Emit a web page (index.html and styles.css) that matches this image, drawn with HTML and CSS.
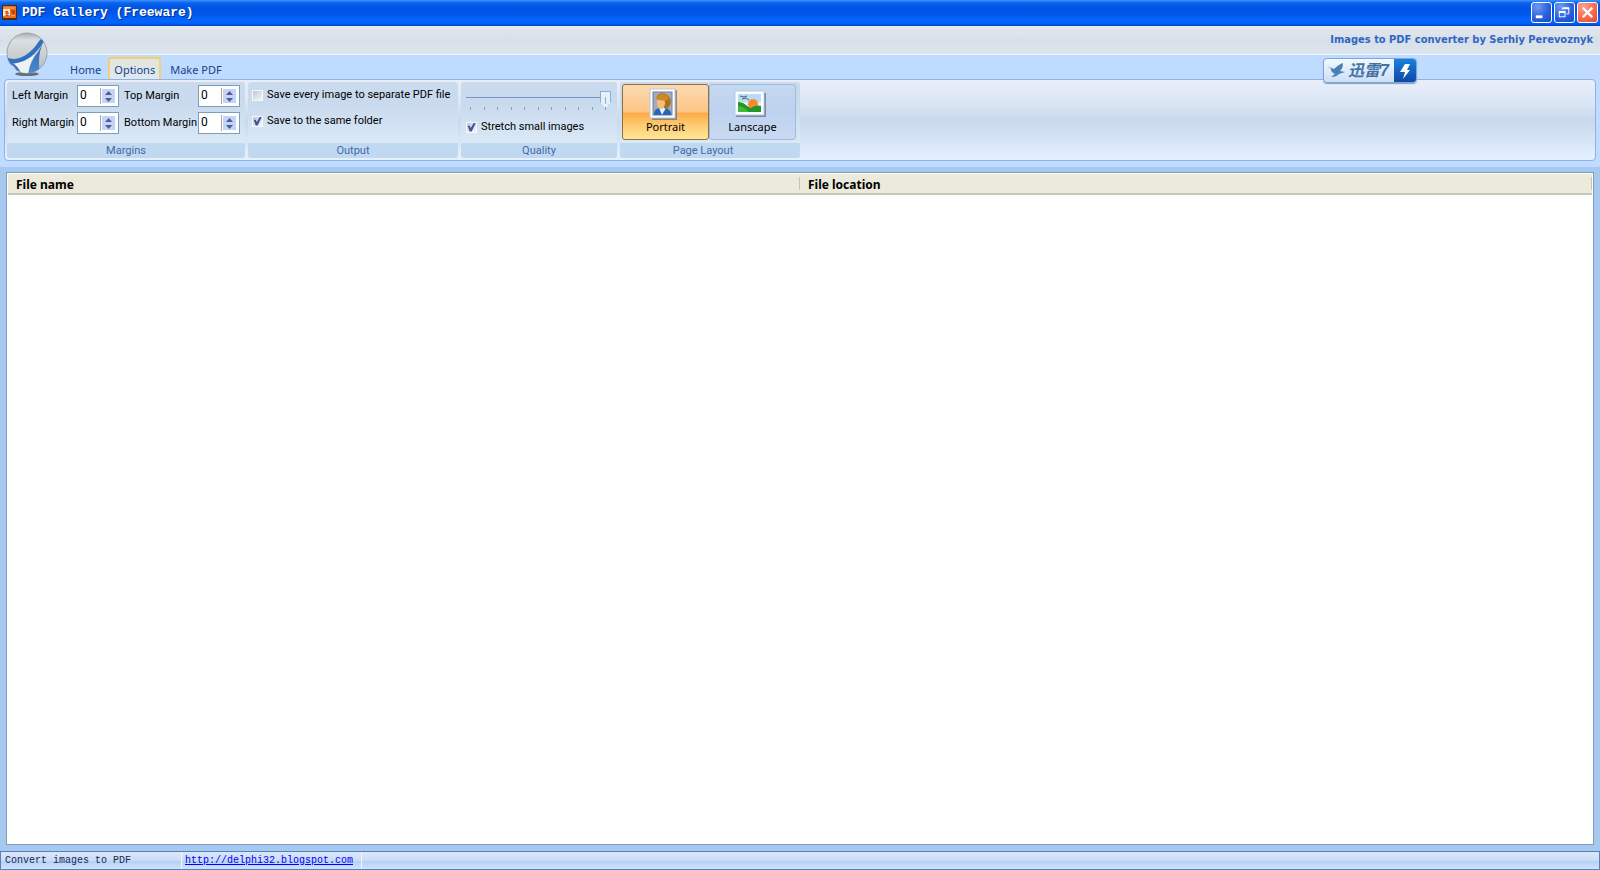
FILE: index.html
```
<!DOCTYPE html>
<html lang="en">
<head>
<meta charset="utf-8">
<title>PDF Gallery (Freeware)</title>
<link rel="stylesheet" href="styles.css">
</head>
<body>
<header class="titlebar">
  <svg class="app-icon" viewBox="0 0 15 15" aria-hidden="true"><rect width="15" height="15" fill="#5a2408"/><rect x="1" y="1" width="13" height="12" fill="#e8701a"/><rect x="1" y="4" width="7" height="7" fill="#f6e5cc"/><path d="M9 5h4v5l-3-1z" fill="#cf3e16"/><path d="M3 6h3l1 3-3 1z" fill="#da5b22"/><path d="M2 11l3-1 4 1z" fill="#8c4a1b"/><path d="M2 3h11M9 11l4-1" stroke="#ffb04b"/></svg>
  <h1 class="title">PDF Gallery (Freeware)</h1>
  <div class="window-buttons">
    <button class="win-btn" aria-label="Minimize"><svg viewBox="0 0 20 20"><rect x="4" y="13" width="7" height="3" fill="#fff"/></svg></button>
    <button class="win-btn" aria-label="Restore"><svg viewBox="0 0 20 20" fill="none" stroke="#fff"><path d="M8 7V5.500h6.500v6H12"/><path d="M8 5.500h7" stroke-width="2"/><rect x="4.500" y="9.500" width="6" height="5"/><path d="M4 9.500h7" stroke-width="2"/></svg></button>
    <button class="win-btn close" aria-label="Close"><svg viewBox="0 0 20 20"><path d="M5 5l10 10M15 5L5 15" stroke="#fff" stroke-width="2.400"/></svg></button>
  </div>
</header>
<section class="ribbon">
  <div class="caption">Images to PDF converter by Serhiy Perevoznyk</div>
  <nav class="tabs">
    <button class="tab">Home</button>
    <button class="tab active">Options</button>
    <button class="tab">Make PDF</button>
  </nav>
  <button class="orb" aria-label="Application menu">
    <svg viewBox="0 0 44 46">
      <defs>
        <linearGradient id="ball" x1="0" y1="0" x2="0" y2="1"><stop offset="0" stop-color="#a9aeb3"/><stop offset=".18" stop-color="#dde0e2"/><stop offset=".6" stop-color="#c9cdd0"/><stop offset="1" stop-color="#b0b6bb"/></linearGradient>
        <linearGradient id="swoosh" x1="0" y1="0" x2="0" y2="1"><stop offset="0" stop-color="#2b62ae"/><stop offset="1" stop-color="#4f8dd8"/></linearGradient>
        <clipPath id="disc"><circle cx="22" cy="21" r="20"/></clipPath>
      </defs>
      <ellipse cx="22" cy="42" rx="12" ry="2" fill="#4c555e" opacity=".8"/>
      <circle cx="22" cy="21" r="20" fill="url(#ball)" stroke="#9ca3a9"/>
      <g clip-path="url(#disc)">
        <path d="M2 28C14 31 26 27 31 21C26 28 24 35 23 44H6z" fill="#eef2f5"/>
        <path d="M0 25C8 29 22 28 34 9l3-3 2 3C31 23 22 29 12 31 8 32 4 31 0 29z" fill="#3470c0"/>
        <path d="M39 9C34 18 33 28 35 44H23C24 35 27 27 33 20z" fill="url(#swoosh)"/>
        <path d="M4 29C11 32 15 37 17 44h-3C12 38 9 34 5 32z" fill="#3d79c4"/>
      </g>
    </svg>
  </button>
  <button class="download-widget" aria-label="迅雷7">
    <svg class="bird" viewBox="0 0 20 16"><path d="M1 3l7 3C11 3 14 1 17 0c0 4-1 6-3 8l5 1-6 2c-2 2-4 3-8 3l4-3C5 9 5 7 5 6L1 5l5 1z" fill="#4b80b5"/></svg>
    <span class="widget-name">迅雷7</span>
    <span class="bolt"><svg viewBox="0 0 22 24"><path d="M11 5h5l-3 6h3L9 20l2-7H6z" fill="#fff"/></svg></span>
  </button>
  <div class="panel">
    <fieldset class="group margins">
      <legend class="group-name">Margins</legend>
      <div class="group-body margin-grid">
        <label for="left">Left Margin</label>
        <div class="spin"><input id="left" type="number" value="0"><span class="arrows"><button aria-label="Increase left margin"></button><button class="down" aria-label="Decrease left margin"></button></span></div>
        <label class="second" for="top">Top Margin</label>
        <div class="spin"><input id="top" type="number" value="0"><span class="arrows"><button aria-label="Increase top margin"></button><button class="down" aria-label="Decrease top margin"></button></span></div>
        <label for="right">Right Margin</label>
        <div class="spin"><input id="right" type="number" value="0"><span class="arrows"><button aria-label="Increase right margin"></button><button class="down" aria-label="Decrease right margin"></button></span></div>
        <label class="second" for="bottom">Bottom Margin</label>
        <div class="spin"><input id="bottom" type="number" value="0"><span class="arrows"><button aria-label="Increase bottom margin"></button><button class="down" aria-label="Decrease bottom margin"></button></span></div>
      </div>
    </fieldset>
    <fieldset class="group output">
      <legend class="group-name">Output</legend>
      <div class="group-body checks">
        <label class="check"><input type="checkbox">Save every image to separate PDF file</label>
        <label class="check"><input type="checkbox" checked>Save to the same folder</label>
      </div>
    </fieldset>
    <fieldset class="group quality">
      <legend class="group-name">Quality</legend>
      <div class="group-body quality-body">
        <input class="slider" type="range" min="0" max="10" value="10" aria-label="Quality">
        <div class="ticks"><i></i><i></i><i></i><i></i><i></i><i></i><i></i><i></i><i></i><i></i><i></i></div>
        <label class="check"><input type="checkbox" checked>Stretch small images</label>
      </div>
    </fieldset>
    <fieldset class="group layout">
      <legend class="group-name">Page Layout</legend>
      <div class="group-body layout-body">
        <button class="big selected" aria-pressed="true">
          <svg viewBox="0 0 32 32"><rect x="2" y="2" width="25" height="30" fill="#59657c" opacity=".65"/><rect x="0" y="1" width="25" height="29" fill="#fff" stroke="#b6c8e6"/><rect x="3" y="4" width="19" height="23" fill="#a7a9bc" stroke="#777f9a"/><path d="M4 27c0-6 3-7 8-7s9 1 9 7z" fill="#2466b5"/><path d="M9 20l3 7 4-7z" fill="#d9f2ff"/><path d="M7 11c-2-6 9-9 13-1 2 4 0 11-5 11l-4-7z" fill="#ad7013"/><ellipse cx="11" cy="15" rx="4" ry="6" fill="#f7bc77"/><path d="M6 11c2-6 12-7 13 0-5 3-9 1-13 0z" fill="#c98b22"/></svg>
          <span>Portrait</span>
        </button>
        <button class="big" aria-pressed="false">
          <svg viewBox="2 1 32 32"><rect x="1" y="6" width="30" height="24" fill="#59657c" opacity=".65"/><rect x="0" y="4" width="29" height="24" fill="#fff" stroke="#b6c8e6"/><rect x="3" y="7" width="23" height="18" fill="#b7dcf6"/><path d="M3 15h23v8H3z" fill="#e8f2db"/><circle cx="18" cy="17" r="5" fill="#f68a32"/><path d="M3 15c6 0 8 4 13 6 4-3 7-3 10-2v6H3z" fill="#249527"/><path d="M3 19c5 0 8 3 11 6H3z" fill="#42b937"/><path d="M5 9l4 1 3-1M7 12l4-1 3 2" fill="none" stroke="#4e6071"/></svg>
          <span>Lanscape</span>
        </button>
      </div>
    </fieldset>
  </div>
</section>
<main class="workspace">
  <div class="list">
    <table class="files">
      <thead><tr><th scope="col">File name</th><th scope="col">File location</th></tr></thead>
      <tbody></tbody>
    </table>
  </div>
</main>
<footer class="status">
  <span class="cell hint">Convert images to PDF</span>
  <span class="cell link"><a href="http://delphi32.blogspot.com">http://delphi32.blogspot.com</a></span>
</footer>
</body>
</html>
```
FILE: styles.css
```
* { box-sizing: border-box; }
html, body { height: 100%; margin: 0; }
body {
  display: flex;
  flex-direction: column;
  overflow: hidden;
  background: #a7c9ef;
  color: #000;
  font: 11px/14px Roboto, "Open Sans", sans-serif;
}
button, input { font: inherit; color: inherit; }
button { padding: 0; border: 0; background: none; }
svg { display: block; overflow: visible; }

.titlebar {
  display: flex;
  align-items: center;
  flex: none;
  height: 26px;
  padding: 0 2px 1px;
  background: linear-gradient(#3c92ff 0, #0a62ee 3px, #0054e3 8px, #0057ea 14px, #0066ff 20px, #0062f8 23px, #0046c8 26px);
}
.app-icon { width: 15px; height: 15px; }
.title {
  flex: 1;
  margin: 0;
  padding: 1px 0 0 5px;
  color: #fff;
  font: bold 13px/16px "Liberation Mono", monospace;
  text-shadow: 1px 1px 0 #0a2f86;
}
.window-buttons { display: flex; gap: 2px; }
.win-btn {
  width: 21px;
  height: 21px;
  border: 1px solid #fff;
  border-radius: 3px;
  background: radial-gradient(circle at 30% 20%, #6d9bf4, #2a61de 55%, #1a4bc9);
}
.close { background: radial-gradient(circle at 30% 20%, #ff9f8c, #f86a50 55%, #e04a30); }

.ribbon {
  position: relative;
  flex: none;
  padding: 0 4px 6px;
  background: #bfdbff;
}
.caption {
  height: 29px;
  margin: 0 -4px;
  padding: 7px 7px 0;
  border-bottom: 1px solid #f2f8ff;
  background: linear-gradient(#e4e9ef, #d7dfe8 50%, #dde5ee);
  color: #2f66c4;
  font: bold 11px/14px "DejaVu Sans Condensed", "DejaVu Sans", sans-serif;
  text-align: right;
}
.tabs { display: flex; align-items: flex-end; height: 24px; padding-left: 60px; }
.tab {
  height: 22px;
  padding: 4px 5px 0;
  border: 1px solid transparent;
  color: #15428b;
  font: 11px/14px "Noto Sans", sans-serif;
}
.tab.active {
  margin: 0 3px 0 1px;
  border: 2px solid #f6cf75;
  border-bottom: 0;
  border-radius: 3px 3px 0 0;
  background: linear-gradient(#e3e6de, #dfe8f0);
  padding: 2px 4px 0;
}
.orb { position: absolute; left: 5px; top: 6px; width: 44px; height: 46px; }
.download-widget {
  position: absolute;
  right: 183px;
  top: 32px;
  display: flex;
  align-items: center;
  width: 94px;
  height: 25px;
  overflow: hidden;
  border: 1px solid #7fa6d8;
  border-radius: 4px;
  background: linear-gradient(#f3f8ff, #cbdff6);
  box-shadow: 0 1px 1px #7d9cc4;
}
.bird { width: 20px; height: 16px; margin-left: 2px; }
.widget-name {
  flex: 1;
  padding-left: 2px;
  color: #4373a3;
  text-align: left;
  font: italic bold 16px/22px "Liberation Sans", "Noto Sans CJK SC", sans-serif;
}
.bolt { width: 22px; height: 24px; background: linear-gradient(#1682dd, #0e45a2); }

.panel {
  display: flex;
  gap: 3px;
  height: 82px;
  padding: 2px;
  border: 1px solid #8db2e3;
  border-radius: 4px;
  background: linear-gradient(#e8effa, #dae5f4 30%, #c8d9ed 50%, #d6e5f6 75%, #e4f1ff);
}
.group {
  display: flex;
  flex-direction: column;
  min-width: 0;
  height: 76px;
  margin: 0;
  padding: 0;
  border: 0;
  border-radius: 3px;
  overflow: hidden;
  position: relative;
  background: linear-gradient(#cbdbed, #c9daee 20px, #dae8f6 60px);
}
.group-name {
  position: absolute;
  bottom: 0;
  width: 100%;
  height: 15px;
  padding: 0;
  background: #c1d9f0;
  color: #3e6aaa;
  line-height: 16px;
  text-align: center;
}
.layout .group-name { padding-right: 14px; }
.group-body { height: 61px; }
.margins { width: 238px; }
.output { width: 210px; }
.quality { width: 156px; }
.layout { width: 180px; }
.margin-grid {
  display: grid;
  grid-template-columns: 65px 42px 79px 42px;
  grid-template-rows: 22px 22px;
  row-gap: 5px;
  align-items: center;
  padding: 3px 0 0 5px;
  white-space: nowrap;
}
.second { padding-left: 5px; }
.spin {
  display: flex;
  align-items: center;
  height: 22px;
  border: 1px solid #7b9ebd;
  background: #fff;
}
.spin input {
  appearance: textfield;
  width: 23px;
  height: 16px;
  padding: 0 0 2px 2px;
  border: 0;
  border-right: 1px solid #aca899;
  outline: 0;
  font-size: 12px;
  background: #fff;
}
.spin input::-webkit-inner-spin-button { appearance: none; margin: 0; }
.arrows { display: flex; flex-direction: column; margin-left: 1px; }
.arrows button { width: 13px; height: 7px; background: #c3d3fd; }
.arrows button::before {
  content: "";
  display: block;
  width: 7px;
  height: 4px;
  margin: 1px auto 0;
  background: #4d6185;
  clip-path: polygon(50% 0, 100% 100%, 0 100%);
}
.arrows .down::before { clip-path: polygon(0 0, 100% 0, 50% 100%); }

.check { display: flex; align-items: center; gap: 4px; height: 14px; line-height: 16px; white-space: nowrap; }
.check input {
  appearance: none;
  flex: none;
  width: 11px;
  height: 11px;
  margin: 0;
  border: 1px solid #f6f8fa;
  background: linear-gradient(135deg, #c4c9d0, #f5f6f7);
}
.check input:checked::before {
  content: "";
  display: block;
  width: 9px;
  height: 9px;
  background: #3c55a0;
  clip-path: polygon(8% 35%, 30% 35%, 42% 62%, 78% 0, 100% 0, 52% 100%, 30% 100%);
}
.checks { display: flex; flex-direction: column; gap: 12px; padding: 6px 0 0 4px; }
.quality-body { padding: 9px 5px 0 5px; }
.slider { appearance: none; display: block; width: 145px; height: 17px; margin: 0; background: linear-gradient(#7397c4, #7397c4) 0 6px / 134px 1px no-repeat; }
.slider::-webkit-slider-thumb {
  appearance: none;
  width: 11px;
  height: 17px;
  background: linear-gradient(#8badd3, #8badd3) 50% 5px / 1px 7px no-repeat, #e6f1fc;
  border: 1px solid #8badd3;
  clip-path: polygon(0 0, 100% 0, 100% 65%, 50% 100%, 0 65%);
}
.ticks { display: flex; justify-content: space-between; width: 136px; height: 3px; margin: -1px 0 0 4px; }
.ticks i { width: 1px; height: 3px; background: #7d9fc9; }
.quality .check { margin-top: 10px; }
.layout-body { display: flex; padding: 2px; }
.big {
  display: flex;
  flex-direction: column;
  align-items: center;
  width: 87px;
  height: 56px;
  padding-top: 3px;
  border: 1px solid #9bbbe3;
  border-radius: 3px;
  background: linear-gradient(#c5d8f0, #bed2ee 50%, #c9daf2);
  font-family: "Noto Sans", sans-serif;
}
.big svg { width: 32px; height: 32px; }
.big.selected { border-color: #8a7042; background: linear-gradient(#fbdbb0, #fec586 50%, #fdab48 52%, #fed27b 80%, #fee69a); }

.workspace { display: flex; flex: 1; min-height: 0; padding: 5px 6px 6px; }
.list { flex: 1; border: 1px solid #7f9db9; background: #fff; padding: 1px; }
.files { width: 100%; border-collapse: collapse; table-layout: fixed; background: #ebeadb; }
.files th {
  height: 20px;
  padding: 1px 8px 0;
  border-bottom: 2px solid #cbc7b8;
  background: linear-gradient(#c7c5b2, #c7c5b2) right 3px / 1px 13px no-repeat;
  font: bold 12px/17px "Noto Sans", sans-serif;
  text-align: left;
}
.status {
  display: flex;
  flex: none;
  height: 19px;
  border: 1px solid #5580bb;
  background: linear-gradient(#dbe8fa, #c9dcf7 50%, #b5d0f3 52%, #cfe2fa);
  color: #15285a;
  font: 10px/18px "Liberation Mono", monospace;
}
.cell { border-right: 1px solid #f1f7ff; padding-left: 4px; }
.hint { width: 181px; }
.link { width: 180px; padding-left: 3px; }
.link a { color: #00f; }
```
